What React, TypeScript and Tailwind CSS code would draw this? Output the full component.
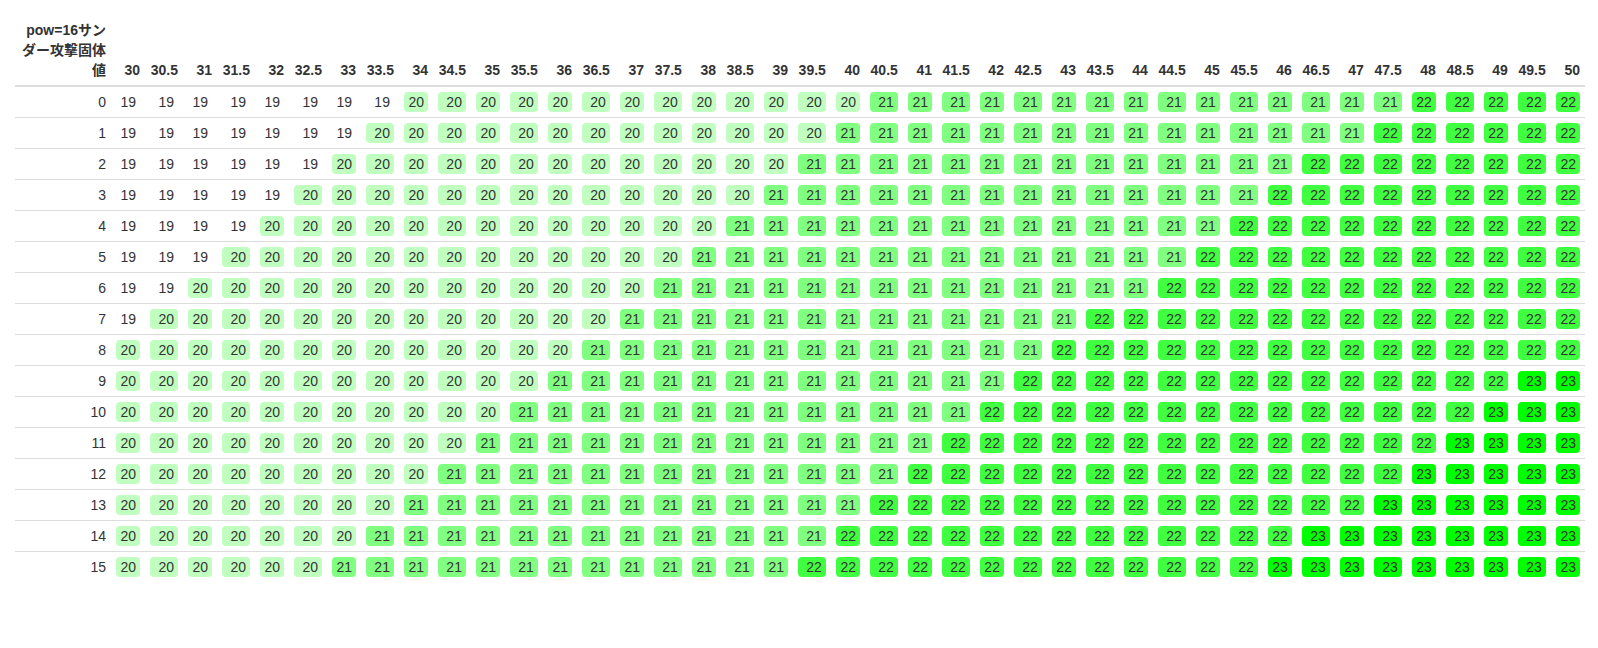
import React from 'react';

const cols = Array.from({ length: 41 }, (_, i) => 30 + i * 0.5);

// column index where the value turns 22 / 23, per row
const to22 = [36, 35, 33, 32, 31, 30, 29, 27, 26, 25, 24, 23, 22, 21, 20, 19];
const to23 = [99, 99, 99, 99, 99, 99, 99, 99, 99, 39, 38, 37, 36, 35, 33, 32];

const valueAt = (row: number, i: number) => {
  if (i >= to23[row]) return 23;
  if (i >= to22[row]) return 22;
  if (i >= 21 - row) return 21;
  if (i >= 8 - row) return 20;
  return 19;
};

const bg: Record<number, string> = {
  19: '',
  20: 'bg-[#c0ffc0]',
  21: 'bg-[#80ff80]',
  22: 'bg-[#40ff40]',
  23: 'bg-[#00ff00]',
};

const App: React.FC = () => {
  return (
    <div className="min-h-screen bg-white pl-[15px] pr-[13px] pt-[15px] font-['Liberation_Sans','Noto_Sans_CJK_JP',sans-serif] text-sm text-[#333]">
      <table className="w-full border-collapse">
        <thead>
          <tr>
            <th className="w-[96px] border-b-2 border-[#ddd] p-[5px] text-right align-bottom font-bold">
              pow=16サンダー攻撃固体値
            </th>
            {cols.map((c) => (
              <th key={c} className="border-b-2 border-[#ddd] p-[5px] text-right align-bottom font-bold whitespace-nowrap">
                {String(c)}
              </th>
            ))}
          </tr>
        </thead>
        <tbody>
          {Array.from({ length: 16 }, (_, row) => (
            <tr key={row}>
              <td className="border-t border-[#ddd] p-[5px] text-right">{row}</td>
              {cols.map((c, i) => {
                const v = valueAt(row, i);
                return (
                  <td key={c} className="border-t border-[#ddd] p-[5px]">
                    <div className={`rounded px-1 text-right whitespace-nowrap ${bg[v]}`}>{v}</div>
                  </td>
                );
              })}
            </tr>
          ))}
        </tbody>
      </table>
    </div>
  );
};

export default App;
